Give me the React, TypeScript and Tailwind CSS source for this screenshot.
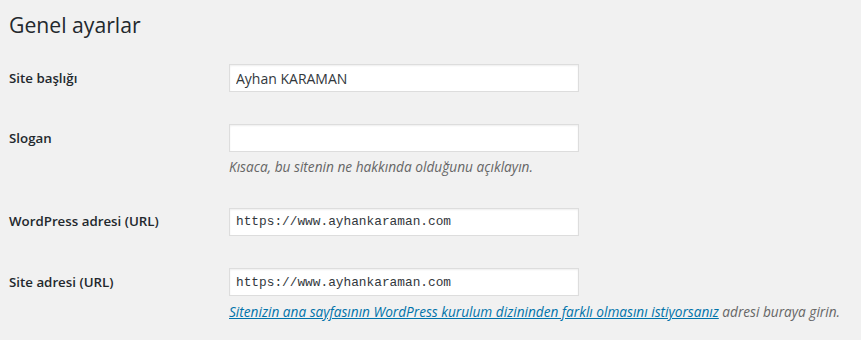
const rows = [
  { label: 'Site başlığı', value: 'Ayhan KARAMAN', mono: false },
  { label: 'Slogan', value: '', mono: false, desc: 'slogan' },
  { label: 'WordPress adresi (URL)', value: 'https://www.ayhankaraman.com', mono: true },
  { label: 'Site adresi (URL)', value: 'https://www.ayhankaraman.com', mono: true, desc: 'url' },
];

const App = () => {
  return (
    <div className="min-h-screen bg-[#f1f1f1] pl-[9px] font-['Open_Sans',sans-serif] text-[#23282d]">
      <h1 className="pt-[10px] pb-[10px] text-[21.2px] font-normal leading-[29px]">Genel ayarlar</h1>

      {rows.map((row) => (
        <div key={row.label} className={`flex pt-[15px] ${row.desc ? 'pb-[15px]' : 'pb-[17px]'}`}>
          <div className="w-[220px] shrink-0 pt-[5px] text-[13.3px] font-semibold leading-[18px]">
            {row.label}
          </div>
          <div>
            <input
              readOnly
              value={row.value}
              className={`h-[28px] w-[350px] border border-[#ddd] bg-white px-[6px] text-[#32373c] shadow-[inset_0_1px_2px_rgba(0,0,0,0.07)] outline-none ${
                row.mono ? "font-['Liberation_Mono',monospace] text-[12.8px]" : 'text-[14px]'
              }`}
            />
            {row.desc === 'slogan' && (
              <p className="mt-[5px] text-[13.7px] italic leading-[20px] text-[#666]">
                Kısaca, bu sitenin ne hakkında olduğunu açıklayın.
              </p>
            )}
            {row.desc === 'url' && (
              <p className="mt-[6px] whitespace-nowrap text-[13.65px] italic leading-[20px] text-[#666]">
                <a href="#" className="text-[#0073aa] underline">
                  Sitenizin ana sayfasının WordPress kurulum dizininden farklı olmasını istiyorsanız
                </a>{' '}
                adresi buraya girin.
              </p>
            )}
          </div>
        </div>
      ))}
    </div>
  );
};

export default App;
